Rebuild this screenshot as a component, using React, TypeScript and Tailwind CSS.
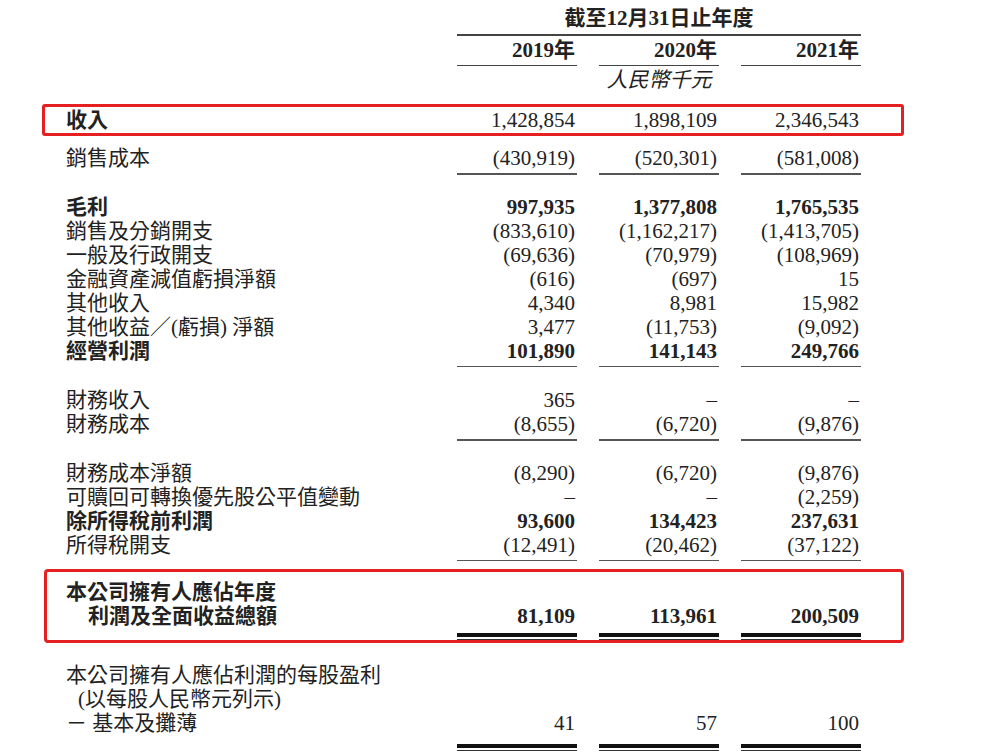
import React from "react";

const F = { fontFamily: '"Liberation Serif", "Noto Sans CJK TC", serif' };

function Cells({ v, bold }: { v: string[]; bold?: boolean }) {
  return (
    <div className="flex gap-[22px]">
      {v.map((x, i) => (
        <div key={i} className={`w-[120px] text-right pr-[2px] whitespace-nowrap ${bold ? "font-bold" : ""}`}>{x}</div>
      ))}
    </div>
  );
}

function Row({ label, v, bold, numBold, pl = 66 }: { label: React.ReactNode; v?: string[]; bold?: boolean; numBold?: boolean; pl?: number }) {
  return (
    <div className="flex h-[24px] items-center leading-[24px]" style={{ paddingLeft: pl }}>
      <div className={`w-[391px] shrink-0 whitespace-nowrap ${bold ? "font-bold" : ""}`}>{label}</div>
      {v && <Cells v={v} bold={numBold ?? bold} />}
    </div>
  );
}

function Lines({ type = "single", pl = 457 }: { type?: "single" | "double"; pl?: number }) {
  return (
    <div className="flex gap-[22px]" style={{ paddingLeft: pl }}>
      {[0, 1, 2].map((i) =>
        type === "single" ? (
          <div key={i} className="w-[120px] h-[1.5px] bg-[#555]" />
        ) : (
          <div key={i} className="w-[120px]">
            <div className="h-[4px] bg-[#111]" />
            <div className="h-[2px]" />
            <div className="h-[1px] bg-[#333]" />
          </div>
        )
      )}
    </div>
  );
}

export default function App() {
  return (
    <div className="w-[984px] h-[756px] bg-white text-[#222] text-[21px] overflow-hidden relative" style={F}>
      <div className="h-[7px]" />
      <div className="pl-[457px]">
        <div className="w-[404px] text-center font-bold h-[24px] leading-[22px]">截至12月31日止年度</div>
        <div className="w-[404px] h-[1.5px] bg-[#444] mt-[3px]" />
        <div className="flex gap-[22px] h-[26px] mt-[1px] leading-[26px]">
          {["2019年", "2020年", "2021年"].map((y) => (
            <div key={y} className="w-[120px] text-right font-bold pr-[2px]">{y}</div>
          ))}
        </div>
        <div className="flex gap-[22px] mt-[2px]">
          {[0, 1, 2].map((i) => (
            <div key={i} className="w-[120px] h-[1.5px] bg-[#444]" />
          ))}
        </div>
        <div className="flex gap-[22px] h-[24px] mt-[2px] leading-[24px]">
          <div className="w-[120px]" />
          <div className="w-[120px] text-center italic">人民幣千元</div>
        </div>
      </div>
      <div className="h-[12px]" />
      <div className="ml-[42px] w-[862px] h-[32px] border-[3px] border-[#e62020] rounded-[3px] flex items-center">
        <Row pl={21} label="收入" bold numBold={false} v={["1,428,854", "1,898,109", "2,346,543"]} />
      </div>
      <div className="h-[10px]" />
      <Row label="銷售成本" v={["(430,919)", "(520,301)", "(581,008)"]} />
      <div className="h-[3px]" />
      <Lines />
      <div className="h-[20px]" />
      <Row label="毛利" bold v={["997,935", "1,377,808", "1,765,535"]} />
      <Row label="銷售及分銷開支" v={["(833,610)", "(1,162,217)", "(1,413,705)"]} />
      <Row label="一般及行政開支" v={["(69,636)", "(70,979)", "(108,969)"]} />
      <Row label="金融資產減值虧損淨額" v={["(616)", "(697)", "15"]} />
      <Row label="其他收入" v={["4,340", "8,981", "15,982"]} />
      <Row label="其他收益／(虧損) 淨額" v={["3,477", "(11,753)", "(9,092)"]} />
      <Row label="經營利潤" bold v={["101,890", "141,143", "249,766"]} />
      <div className="h-[3px]" />
      <Lines />
      <div className="h-[21px]" />
      <Row label="財務收入" v={["365", "–", "–"]} />
      <Row label="財務成本" v={["(8,655)", "(6,720)", "(9,876)"]} />
      <div className="h-[3px]" />
      <Lines />
      <div className="h-[20px]" />
      <Row label="財務成本淨額" v={["(8,290)", "(6,720)", "(9,876)"]} />
      <Row label="可贖回可轉換優先股公平值變動" v={["–", "–", "(2,259)"]} />
      <Row label="除所得稅前利潤" bold v={["93,600", "134,423", "237,631"]} />
      <Row label="所得稅開支" v={["(12,491)", "(20,462)", "(37,122)"]} />
      <div className="h-[3px]" />
      <Lines />
      <div className="h-[8px]" />
      <div className="ml-[44px] w-[860px] h-[74px] border-[3px] border-[#e62020] rounded-[4px] pt-[8px]">
        <Row pl={19} bold label="本公司擁有人應佔年度" />
        <Row pl={19} bold label={<span className="pl-[22px]">利潤及全面收益總額</span>} v={["81,109", "113,961", "200,509"]} />
        <div className="h-[5px]" />
        <Lines type="double" pl={410} />
      </div>
      <div className="h-[20px]" />
      <Row label="本公司擁有人應佔利潤的每股盈利" />
      <Row label={<span className="pl-[12px]">(以每股人民幣元列示)</span>} />
      <Row label="－ 基本及攤薄" v={["41", "57", "100"]} />
      <div className="h-[9px]" />
      <Lines type="double" />
    </div>
  );
}
